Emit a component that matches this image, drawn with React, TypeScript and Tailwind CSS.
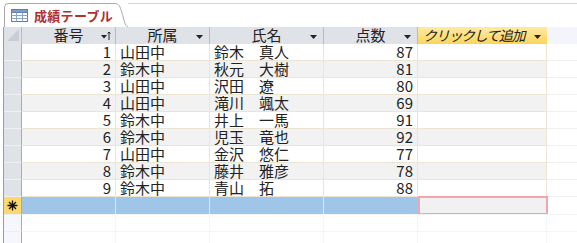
import React from "react";

const ROWS = [
  { id: 1, school: "山田中", name: "鈴木　真人", score: 87 },
  { id: 2, school: "鈴木中", name: "秋元　大樹", score: 81 },
  { id: 3, school: "山田中", name: "沢田　遼", score: 80 },
  { id: 4, school: "山田中", name: "滝川　颯太", score: 69 },
  { id: 5, school: "鈴木中", name: "井上　一馬", score: 91 },
  { id: 6, school: "鈴木中", name: "児玉　竜也", score: 92 },
  { id: 7, school: "山田中", name: "金沢　悠仁", score: 77 },
  { id: 8, school: "鈴木中", name: "藤井　雅彦", score: 78 },
  { id: 9, school: "鈴木中", name: "青山　拓", score: 88 },
];

const font = { fontFamily: '"Noto Sans CJK JP", "Noto Sans", sans-serif' };

function DropArrow() {
  return (
    <svg width="7" height="4" viewBox="0 0 7 4" className="absolute right-[6px] top-[8px]">
      <path d="M0 0h7L3.5 4z" fill="#222" />
    </svg>
  );
}

function SortArrow() {
  return (
    <svg width="10" height="9" viewBox="0 0 10 9" className="absolute right-[4px] top-[4px]">
      <path d="M0 4h6L3 7.5z" fill="#222" />
      <path d="M8 1v8M6.5 2.5L8 1l1.5 1.5" stroke="#222" strokeWidth="1" fill="none" />
    </svg>
  );
}

function TableIcon() {
  return (
    <svg width="17" height="13" viewBox="0 0 17 13">
      <rect x="0.5" y="0.5" width="16" height="12" fill="#fff" stroke="#5b7fb3" />
      <rect x="0.5" y="0.5" width="16" height="3" fill="#7d9cc9" stroke="#5b7fb3" />
      <path d="M0.5 6.5h16M0.5 9.5h16M5.5 3.5v9M11.5 3.5v9" stroke="#8aa6cf" />
    </svg>
  );
}

function Asterisk() {
  return (
    <svg width="11" height="11" viewBox="0 0 11 11">
      <path d="M5.5 0.5v10M0.5 5.5h10M2 2l7 7M9 2l-7 7" stroke="#111" strokeWidth="1.3" />
    </svg>
  );
}

const cell = "h-[17px] shrink-0 border-r border-b border-[#ebe5d3] px-[4px] text-[15px] leading-[16px] text-[#222]";

export default function App() {
  return (
    <div className="h-[243px] w-[577px] overflow-hidden bg-white" style={font}>
      {/* tab strip */}
      <div className="flex h-[27px] items-end">
        <div className="ml-[4px] flex h-[24px] items-center gap-[6px] rounded-tl-[5px] border-l border-t border-[#a9a9a9] bg-white pl-[6px] pr-[2px]">
          <TableIcon />
          <span className="text-[13px] font-bold tracking-[0.3px] text-[#b0302e]">成績テーブル</span>
        </div>
        <svg width="14" height="24" viewBox="0 0 14 24" className="-ml-px shrink-0">
          <path d="M0 0.5 C5 0.5 6 3 8 10 C10 17 11 23 14 24" stroke="#a9a9a9" fill="none" />
        </svg>
        <div className="mb-[23px] h-px flex-1 border-t border-[#d6d6d6]" />
      </div>

      <div className="ml-[3px] border-l border-[#9c9c9c]">
        {/* header */}
        <div className="flex h-[17px] bg-[#dfe3e8]">
          <div className="relative h-[17px] w-[18px] shrink-0 border-r border-[#b7bcc3]">
            <svg width="12" height="12" viewBox="0 0 12 12" className="absolute left-[3px] top-[2px]">
              <path d="M12 0v12H0z" fill="#c9ced6" />
            </svg>
          </div>
          {[
            { label: "番号", w: "w-[94px]", sort: true },
            { label: "所属", w: "w-[94px]" },
            { label: "氏名", w: "w-[114px]" },
            { label: "点数", w: "w-[94px]" },
          ].map((h) => (
            <div
              key={h.label}
              className={`relative h-[17px] ${h.w} shrink-0 border-r border-[#b7bcc3] text-center text-[15px] leading-[16px] text-[#222]`}
            >
              {h.label}
              {h.sort ? <SortArrow /> : <DropArrow />}
            </div>
          ))}
          <div className="relative h-[17px] w-[129px] shrink-0 bg-gradient-to-b from-[#ffeaa3] to-[#fbd557] pl-[5px] text-[14px] italic leading-[16px] tracking-[-1.3px] text-[#222]">
            クリックして追加
            <DropArrow />
          </div>
          <div className="h-[17px] flex-1 bg-[#f4f5fa]" />
        </div>

        {/* data rows */}
        {ROWS.map((r, i) => (
          <div key={r.id} className={`flex ${i % 2 === 1 ? "bg-[#f2f2f2]" : "bg-white"}`}>
            <div className="h-[17px] w-[18px] shrink-0 border-r border-b border-r-[#a7acb3] border-b-[#eef0f3] bg-[#dfe3e8]" />
            <div className={`${cell} w-[94px] text-right`}>{r.id}</div>
            <div className={`${cell} w-[94px]`}>{r.school}</div>
            <div className={`${cell} w-[114px] whitespace-pre`}>{r.name}</div>
            <div className={`${cell} w-[94px] text-right`}>{r.score}</div>
            <div className={`${cell} w-[129px]`} />
            <div className="h-[17px] flex-1 border-b border-[#f0f0f0] bg-white" />
          </div>
        ))}

        {/* new record row */}
        <div className="flex">
          <div className="flex h-[17px] w-[18px] shrink-0 items-center justify-center border-r border-[#a7acb3] bg-[#fdd86a]">
            <Asterisk />
          </div>
          <div className="h-[17px] w-[94px] shrink-0 border-r border-[#e6e6e0] bg-[#9fc6e9]" />
          <div className="h-[17px] w-[94px] shrink-0 border-r border-[#e6e6e0] bg-[#9fc6e9]" />
          <div className="h-[17px] w-[114px] shrink-0 border-r border-[#e6e6e0] bg-[#9fc6e9]" />
          <div className="h-[17px] w-[94px] shrink-0 bg-[#9fc6e9]" />
          <div className="-my-px h-[19px] w-[130px] shrink-0 border-2 border-[#f4a4ac] bg-[#f1f1f1]" />
          <div className="h-[17px] flex-1 bg-white" />
        </div>

        {/* empty area */}
        {[0, 1].map((k) => (
          <div key={k} className="flex">
            <div className="h-[17px] w-[18px] shrink-0 border-r border-t border-r-[#a7acb3] border-t-[#eceef5] bg-[#f6f7fc]" />
            <div className="h-[17px] flex-1 border-t border-[#f4f4f4]">
              <div className="flex h-full">
                <div className="h-full w-[94px] border-r border-[#f6f6f6]" />
                <div className="h-full w-[94px] border-r border-[#f6f6f6]" />
                <div className="h-full w-[114px] border-r border-[#f6f6f6]" />
                <div className="h-full w-[94px] border-r border-[#f6f6f6]" />
                <div className="h-full w-[129px] border-r border-[#f6f6f6]" />
              </div>
            </div>
          </div>
        ))}
      </div>
    </div>
  );
}
